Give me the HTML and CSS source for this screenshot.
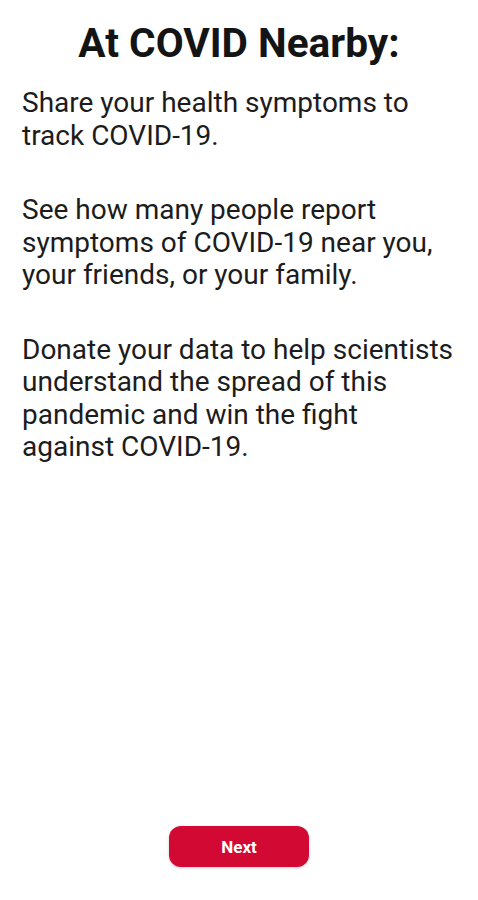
FILE: index.html
```html
<!DOCTYPE html>
<html>
<head>
<meta charset="utf-8">
<link rel="stylesheet" href="styles.css">
</head>
<body>
<main class="screen">
  <section class="content">
    <h1 class="title">At COVID Nearby:</h1>
    <p class="para">Share your health symptoms to<br>track COVID-19.</p>
    <p class="para">See how many people report<br>symptoms of COVID-19 near you,<br>your friends, or your family.</p>
    <p class="para">Donate your data to help scientists<br>understand the spread of this<br>pandemic and win the fight<br>against COVID-19.</p>
  </section>
  <footer class="footer">
    <button class="next">Next</button>
  </footer>
</main>
</body>
</html>
```

FILE: styles.css
```css
html, body {
  margin: 0;
  padding: 0;
  background: #ffffff;
}
.screen {
  width: 478px;
  height: 900px;
  display: flex;
  flex-direction: column;
  font-family: Roboto, "Noto Sans", sans-serif;
  color: #1c1c1c;
}
.content {
  flex: 1;
  padding: 19px 22px 0 22px;
}
.title {
  margin: 0;
  text-align: center;
  font-size: 40.6px;
  font-weight: 700;
  line-height: 48px;
  color: #141414;
}
.para {
  margin: 42px 0 0 0;
  font-size: 28px;
  line-height: 32.5px;
  font-weight: 400;
  white-space: nowrap;
}
.title + .para {
  margin-top: 20px;
}
.footer {
  display: flex;
  justify-content: center;
  padding-bottom: 33px;
}
.next {
  width: 140px;
  height: 41px;
  border: none;
  border-radius: 12px;
  background: #d20a33;
  color: #ffffff;
  font-family: Roboto, "Noto Sans", sans-serif;
  font-weight: 700;
  font-size: 17px;
  box-shadow: 0 1px 3px rgba(0,0,0,0.2);
}
```
